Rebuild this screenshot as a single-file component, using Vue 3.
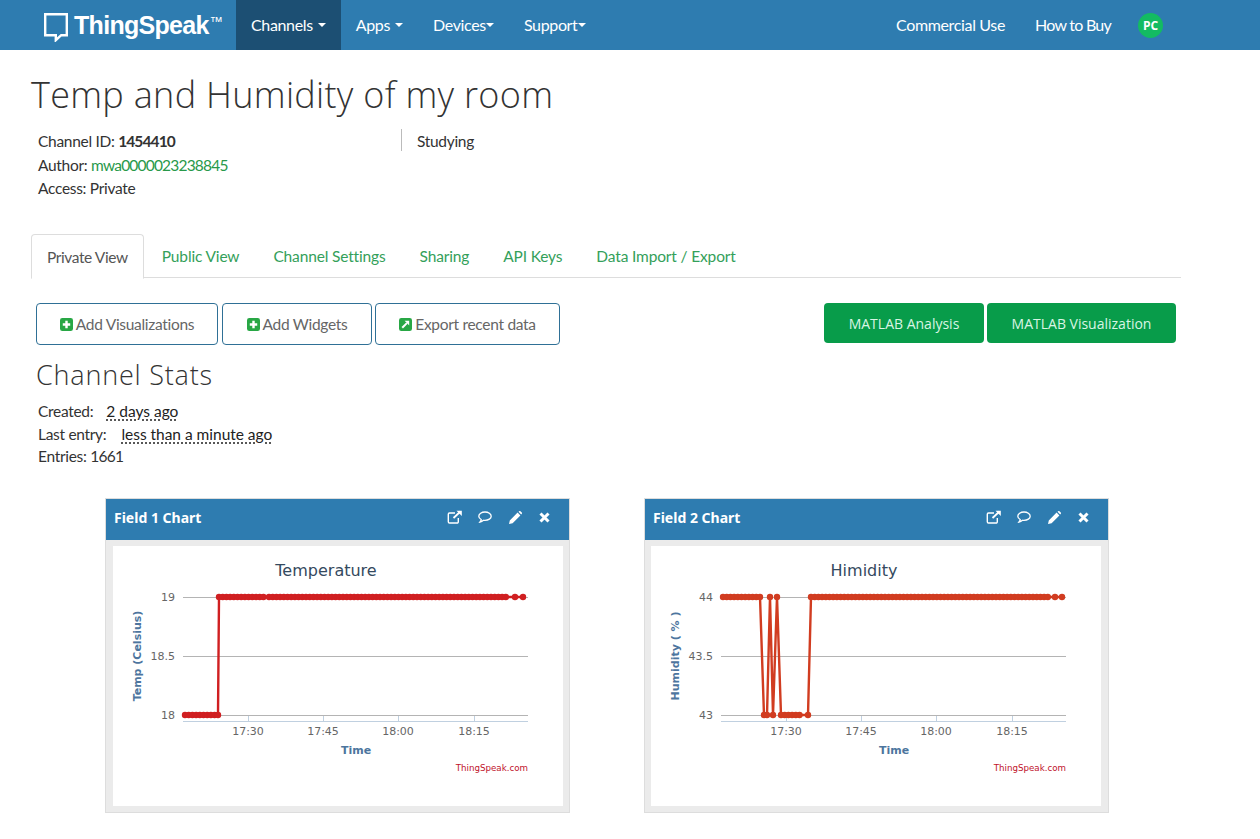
<script setup>
const range = (from, to, step = 3.7) => {
  const out = []
  for (let x = from; x <= to; x += step) out.push(+x.toFixed(1))
  return out
}
const Y = { hi: 51, mid: 110, lo: 169 }
const series1 = [
  ...range(72, 105).map(x => [x, Y.lo]),
  [105, Y.lo],
  ...range(106, 153).map(x => [x, Y.hi]),
  ...range(156, 395).map(x => [x, Y.hi]),
  [402, Y.hi], [410, Y.hi]
]
const series2 = [
  ...range(72, 110).map(x => [x, Y.hi]),
  [113, Y.lo], [116, Y.lo], [119, Y.hi], [122, Y.lo], [126, Y.hi],
  ...range(130, 150).map(x => [x, Y.lo]),
  [157, Y.lo],
  ...range(160, 397).map(x => [x, Y.hi]),
  [404, Y.hi], [411, Y.hi]
]
const poly = s => s.map(p => p.join(',')).join(' ')
const charts = [
  { id: 1, title: 'Temperature', yTitle: 'Temp (Celsius)', labels: ['19', '18.5', '18'], color: '#d01f21', points: series1, line: poly(series1), name: 'Field 1 Chart' },
  { id: 2, title: 'Himidity', yTitle: 'Humidity ( % )', labels: ['44', '43.5', '43'], color: '#d13c20', points: series2, line: poly(series2), name: 'Field 2 Chart' }
]
const gridY = [Y.hi, Y.mid, Y.lo]
const ticks = [
  { x: 135, t: '17:30' },
  { x: 210, t: '17:45' },
  { x: 285, t: '18:00' },
  { x: 361, t: '18:15' }
]
const tabs = ['Public View', 'Channel Settings', 'Sharing', 'API Keys', 'Data Import / Export']
</script>

<template>
  <div class="app">
    <nav class="nav">
      <a class="logo">
        <svg class="logo-icon" width="24" height="29" viewBox="0 0 24 29">
          <path d="M1.2 1.2h21.6v21h-5.6l-5.4 5v-5H1.2z" fill="none" stroke="#fff" stroke-width="2.4" />
        </svg>
        <span class="logo-text">ThingSpeak</span><span class="logo-tm">™</span>
      </a>
      <a class="nav-item active">Channels<i class="caret spaced"></i></a>
      <a class="nav-item">Apps<i class="caret spaced"></i></a>
      <a class="nav-item">Devices<i class="caret tight"></i></a>
      <a class="nav-item">Support<i class="caret"></i></a>
      <div class="nav-spacer"></div>
      <a class="nav-item">Commercial Use</a>
      <a class="nav-item narrow">How to Buy</a>
      <span class="avatar">PC</span>
    </nav>

    <main class="page">
      <h1 class="title">Temp and Humidity of my room</h1>

      <section class="info">
        <div class="info-left">
          <div>Channel ID: <strong>1454410</strong></div>
          <div>Author: <a class="link">mwa0000023238845</a></div>
          <div>Access: Private</div>
        </div>
        <div class="info-right">Studying</div>
      </section>

      <div class="tabs">
        <a class="tab current">Private View</a>
        <a v-for="t in tabs" :key="t" class="tab">{{ t }}</a>
      </div>

      <div class="actions">
        <div class="action-group">
          <a class="btn w1">
            <svg class="ico" viewBox="0 0 14 14"><rect width="14" height="14" rx="2.5" fill="#28a745" /><path d="M7 3v8M3 7h8" stroke="#fff" stroke-width="2.6" /></svg>
            Add Visualizations
          </a>
          <a class="btn w2">
            <svg class="ico" viewBox="0 0 14 14"><rect width="14" height="14" rx="2.5" fill="#28a745" /><path d="M7 3v8M3 7h8" stroke="#fff" stroke-width="2.6" /></svg>
            Add Widgets
          </a>
          <a class="btn w3">
            <svg class="ico" viewBox="0 0 14 14"><rect width="14" height="14" rx="2.5" fill="#28a745" /><path d="M3.5 10.5L8.5 5.5" stroke="#fff" stroke-width="2.2" /><path d="M6 3h5v5z" fill="#fff" /></svg>
            Export recent data
          </a>
        </div>
        <div class="action-group">
          <a class="solid w4">MATLAB Analysis</a>
          <a class="solid w5">MATLAB Visualization</a>
        </div>
      </div>

      <h2 class="subtitle">Channel Stats</h2>
      <section class="stats">
        <div>Created:<abbr class="dotted">2 days ago</abbr></div>
        <div>Last entry:<abbr class="dotted wide">less than a minute ago</abbr></div>
        <div>Entries: <span class="num">1661</span></div>
      </section>

      <section class="cards">
        <article v-for="c in charts" :key="c.id" class="card">
          <header class="card-head">
            <span class="card-title">{{ c.name }}</span>
            <span class="card-tools">
              <svg class="tool-first" width="16" height="14" viewBox="0 0 16 14" fill="none" stroke="#fff" stroke-width="1.4">
                <path d="M8 3H2.5A1.2 1.2 0 0 0 1.3 4.2v7.6A1.2 1.2 0 0 0 2.5 13h7.6a1.2 1.2 0 0 0 1.2-1.2V8" />
                <path d="M6.5 8L13.5 1.5" stroke-width="1.8" />
                <path d="M9.5 .7h5.3V6z" fill="#fff" stroke="none" />
              </svg>
              <svg width="14" height="14" viewBox="0 0 14 14" fill="none" stroke="#fff" stroke-width="1.3">
                <path d="M7 2C3.6 2 .8 3.8.8 6.2c0 1.4 1 2.6 2.4 3.3-.1 1-.6 1.8-1.2 2.5 1.4-.2 2.6-.9 3.5-1.7.5.1 1 .1 1.5.1 3.4 0 6.2-1.9 6.2-4.2S10.4 2 7 2z" />
              </svg>
              <svg width="13" height="13" viewBox="0 0 13 13" fill="#fff">
                <path d="M0 13l.8-3.6L8.6 1.6l2.8 2.8-7.8 7.8zM9.5.8l.7-.6c.4-.3.9-.3 1.2 0l1.4 1.4c.3.3.3.8 0 1.2l-.6.7z" />
              </svg>
              <svg width="11" height="11" viewBox="0 0 11 11" stroke="#fff" stroke-width="3">
                <path d="M1.5 1.5l8 8M9.5 1.5l-8 8" />
              </svg>
            </span>
          </header>
          <div class="card-body">
            <svg class="chart" width="450" height="260" viewBox="0 0 450 260">
              <text class="c-title" x="213" y="30" text-anchor="middle">{{ c.title }}</text>
              <line v-for="g in gridY" :key="g" x1="70" x2="415" :y1="g + 0.5" :y2="g + 0.5" stroke="#b4b4b4" />
              <line x1="70" x2="415" y1="175.5" y2="175.5" stroke="#c0d0e0" />
              <line v-for="t in ticks" :key="t.x" :x1="t.x + 0.5" :x2="t.x + 0.5" y1="175" y2="170" stroke="#c0d0e0" />
              <text v-for="(l, i) in c.labels" :key="l" class="c-label" x="62" :y="gridY[i] + 4" text-anchor="end">{{ l }}</text>
              <text v-for="t in ticks" :key="t.t" class="c-label" :x="t.x" y="189" text-anchor="middle">{{ t.t }}</text>
              <text class="c-axis" x="243" y="208" text-anchor="middle">Time</text>
              <text class="c-axis" text-anchor="middle" transform="translate(28 110) rotate(-90)">{{ c.yTitle }}</text>
              <text class="c-credit" x="415" y="225" text-anchor="end">ThingSpeak.com</text>
              <polyline :points="c.line" fill="none" :stroke="c.color" stroke-width="2.4" />
              <circle v-for="p in c.points" :key="p.join()" :cx="p[0]" :cy="p[1]" r="3.2" :fill="c.color" />
            </svg>
          </div>
        </article>
      </section>
    </main>
  </div>
</template>

<style>
html, body { margin: 0; background: #fff; }
</style>

<style scoped>
.app {
  font-family: Lato, "Open Sans", sans-serif;
  font-size: 15.5px;
  letter-spacing: -.3px;
  color: #333;
}
.nav {
  height: 50px;
  background: #2e7cb0;
  display: flex;
  align-items: stretch;
  padding-right: 97px;
  color: #fff;
  font-size: 16px;
  letter-spacing: -.35px;
}
.logo {
  width: 192px;
  padding-left: 44px;
  display: flex;
  align-items: center;
  font-family: "Liberation Sans", sans-serif;
  font-weight: 700;
  letter-spacing: 0;
}
.logo-icon { margin-right: 6px; margin-top: 5px; flex: none; }
.logo-text { font-size: 25px; letter-spacing: -.7px; }
.logo-tm { font-size: 13px; font-weight: 400; align-self: flex-start; margin-top: 14px; margin-left: 1px; }
.nav-item {
  display: flex;
  align-items: center;
  padding: 0 15px 2px;
  white-space: nowrap;
}
.nav-item.active { background: #1c4f73; }
.nav-item.narrow { letter-spacing: -.75px; }
.caret {
  display: inline-block;
  width: 0;
  height: 0;
  border-left: 4px solid transparent;
  border-right: 4px solid transparent;
  border-top: 4px solid #fff;
  margin-left: 1px;
  margin-top: 2px;
}
.caret.spaced { margin-left: 5px; }
.caret.tight { margin-left: 0; }
.nav-spacer { flex: 1; }
.avatar {
  align-self: center;
  margin-left: 12px;
  width: 25px;
  height: 25px;
  border-radius: 50%;
  background: #13bb62;
  font: 700 12px "Open Sans", sans-serif;
  letter-spacing: 0;
  display: flex;
  align-items: center;
  justify-content: center;
}
.page { padding: 25px 79px 0 31px; }
.title {
  margin: 0 0 14px;
  font: 300 36px/40px "Open Sans", sans-serif;
  letter-spacing: .3px;
  color: #333;
}
.info {
  display: flex;
  height: 70px;
  margin-left: 7px;
  line-height: 23.5px;
}
.info-left { width: 363px; padding-top: 1px; }
.info-left strong { letter-spacing: -.9px; }
.info-right {
  height: 22px;
  line-height: 24px;
  border-left: 1px solid #bbb;
  padding-left: 15px;
}
.link { color: #28994a; letter-spacing: -.8px; }
.tabs {
  margin-top: 35px;
  height: 43px;
  display: flex;
  gap: 2px;
  border-bottom: 1px solid #ddd;
}
.tab {
  padding: 0 16px;
  line-height: 44px;
  color: #34a05a;
  letter-spacing: -.15px;
  white-space: nowrap;
}
.tab.current {
  padding: 0 15px;
  height: 43px;
  color: #555;
  background: #fff;
  letter-spacing: -.4px;
  border: 1px solid #ddd;
  border-bottom: 1px solid #fff;
  border-radius: 4px 4px 0 0;
}
.actions {
  margin: 25px 5px 0;
  display: flex;
  justify-content: space-between;
  align-items: flex-start;
}
.action-group { display: flex; gap: 3px; }
.btn {
  box-sizing: border-box;
  height: 42px;
  display: flex;
  align-items: center;
  justify-content: center;
  gap: 3px;
  border: 1px solid #2f7096;
  border-radius: 4px;
  color: #666;
  white-space: nowrap;
}
.w1 { width: 182px; margin-right: 1px; }
.w2 { width: 150px; }
.w3 { width: 185px; }
.ico { width: 13px; height: 13px; flex: none; }
.solid {
  height: 40px;
  display: flex;
  align-items: center;
  justify-content: center;
  background: #089c4a;
  color: #d9f5e4;
  border-radius: 4px;
  font-family: "Open Sans", sans-serif;
  font-size: 14px;
  letter-spacing: 0;
  white-space: nowrap;
}
.w4 { width: 160px; }
.w5 { width: 189px; }
.subtitle {
  margin: 15px 0 0 5px;
  font: 300 27px/30px "Open Sans", sans-serif;
  letter-spacing: .8px;
  color: #333;
}
.stats {
  margin: 10px 0 0 7px;
  line-height: 22.5px;
}
.num { letter-spacing: -.7px; }
.dotted {
  margin-left: 13px;
  color: #222;
  letter-spacing: 0;
  text-decoration: underline dotted #222;
  text-underline-offset: 3px;
}
.dotted.wide { margin-left: 15px; letter-spacing: -.02px; }
.cards {
  margin: 30.5px 0 0 74px;
  display: flex;
  gap: 74px;
}
.card {
  box-sizing: border-box;
  width: 465px;
  border: 1px solid #ddd;
  background: #ebebeb;
}
.card-head {
  box-sizing: border-box;
  height: 41px;
  background: #2e7cb0;
  color: #fff;
  display: flex;
  align-items: center;
  justify-content: space-between;
  padding: 0 19px 5px 8px;
}
.card-title { font: 700 14px "Noto Sans", sans-serif; letter-spacing: 0; }
.card-tools { display: flex; align-items: center; gap: 17px; }
.tool-first { margin-right: -2px; }
.card-body { padding: 6px 6px 6px 7px; }
.card:nth-child(2) .card-body { padding: 6px 7px 6px 6px; }
.chart { display: block; background: #fff; }
.c-title { font: 16px "DejaVu Sans", sans-serif; letter-spacing: 0; fill: #34495e; }
.c-label { font: 11px "DejaVu Sans", sans-serif; letter-spacing: 0; fill: #666; }
.c-axis { font: 700 11px "DejaVu Sans", sans-serif; letter-spacing: 0; fill: #4d759e; }
.c-credit { font: 8.7px "DejaVu Sans", sans-serif; letter-spacing: 0; fill: #c0112a; }
</style>
